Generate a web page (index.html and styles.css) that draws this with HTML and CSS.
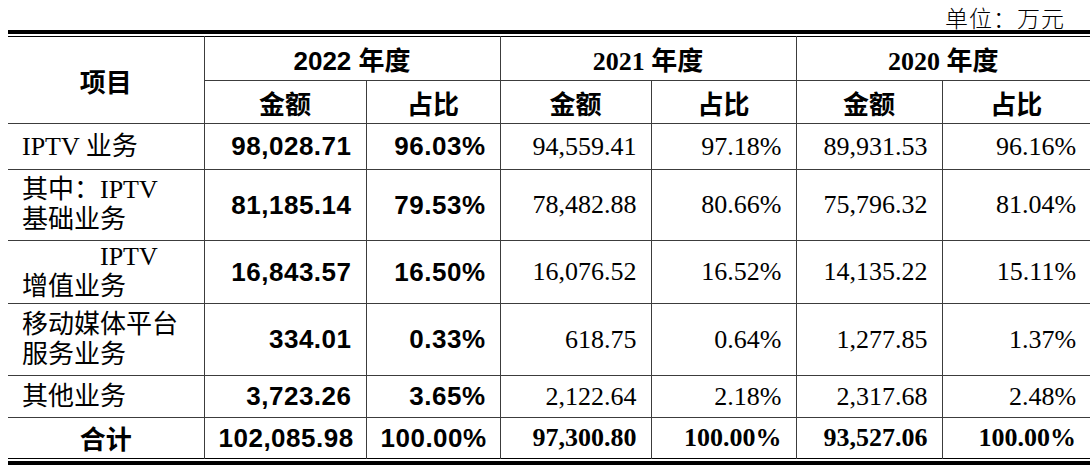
FILE: index.html
```html
<!DOCTYPE html>
<html lang="zh-CN">
<head>
<meta charset="utf-8">
<title>收入构成</title>
<link rel="stylesheet" href="styles.css">
</head>
<body>
<div class="page">
  <div class="unit">单位：万元</div>
  <div class="frame">
    <table class="grid">
      <colgroup>
        <col class="c-label"><col class="c-a22"><col class="c-p22"><col class="c-a21"><col class="c-p21"><col class="c-a20"><col class="c-p20">
      </colgroup>
      <thead>
        <tr class="row-h1">
          <th rowspan="2" class="hd">项目</th>
          <th colspan="2" class="yr yr-sans">2022 年度</th>
          <th colspan="2" class="yr yr-serif">2021 年度</th>
          <th colspan="2" class="yr yr-serif">2020 年度</th>
        </tr>
        <tr class="row-h2">
          <th class="hd">金额</th><th class="hd">占比</th>
          <th class="hd">金额</th><th class="hd">占比</th>
          <th class="hd">金额</th><th class="hd">占比</th>
        </tr>
      </thead>
      <tbody>
        <tr class="row-1">
          <td class="lbl">IPTV 业务</td>
          <td class="n22">98,028.71</td><td class="n22">96.03%</td>
          <td class="num">94,559.41</td><td class="num">97.18%</td>
          <td class="num">89,931.53</td><td class="num">96.16%</td>
        </tr>
        <tr class="row-2">
          <td class="lbl">其中：IPTV<br>基础业务</td>
          <td class="n22">81,185.14</td><td class="n22">79.53%</td>
          <td class="num">78,482.88</td><td class="num">80.66%</td>
          <td class="num">75,796.32</td><td class="num">81.04%</td>
        </tr>
        <tr class="row-3">
          <td class="lbl"><span class="indent">IPTV</span><br>增值业务</td>
          <td class="n22">16,843.57</td><td class="n22">16.50%</td>
          <td class="num">16,076.52</td><td class="num">16.52%</td>
          <td class="num">14,135.22</td><td class="num">15.11%</td>
        </tr>
        <tr class="row-4">
          <td class="lbl">移动媒体平台<br>服务业务</td>
          <td class="n22">334.01</td><td class="n22">0.33%</td>
          <td class="num">618.75</td><td class="num">0.64%</td>
          <td class="num">1,277.85</td><td class="num">1.37%</td>
        </tr>
        <tr class="row-5">
          <td class="lbl">其他业务</td>
          <td class="n22">3,723.26</td><td class="n22">3.65%</td>
          <td class="num">2,122.64</td><td class="num">2.18%</td>
          <td class="num">2,317.68</td><td class="num">2.48%</td>
        </tr>
        <tr class="row-6">
          <td class="lbl lbl-total">合计</td>
          <td class="n22">102,085.98</td><td class="n22">100.00%</td>
          <td class="num num-bold">97,300.80</td><td class="num num-bold">100.00%</td>
          <td class="num num-bold">93,527.06</td><td class="num num-bold">100.00%</td>
        </tr>
      </tbody>
    </table>
  </div>
</div>
</body>
</html>
```

FILE: styles.css
```css
html, body {
  margin: 0;
  padding: 0;
  background: #ffffff;
}

.page {
  width: 1082px;
  padding-left: 8px;
  color: #000;
  font-family: "Liberation Serif", "Noto Sans CJK SC", serif;
}

.unit {
  height: 30px;
  line-height: normal;
  font-size: 23px;
  letter-spacing: 1px;
  font-weight: 300;
  text-align: right;
  padding-right: 25px;
  box-sizing: border-box;
  font-family: "Noto Sans CJK SC", sans-serif;
  overflow: visible;
}

.frame {
  border-top: 4px solid #000;
  border-bottom: 4px solid #000;
  padding: 2px 0;
}

.grid {
  width: 1082px;
  table-layout: fixed;
  border-collapse: collapse;
  border-top: 1px solid #000;
  border-bottom: 1px solid #000;
}

.c-label { width: 196px; }
.c-a22 { width: 162px; }
.c-p22 { width: 134px; }
.c-a21 { width: 151px; }
.c-p21 { width: 145px; }
.c-a20 { width: 146px; }
.c-p20 { width: 148px; }

.grid th,
.grid td {
  border: 1px solid #3c3c3c;
  padding: 0 14px;
  vertical-align: middle;
  font-size: 26px;
  white-space: nowrap;
}

.grid tr > :first-child { border-left: none; }
.grid tr > :last-child { border-right: none; }
.grid thead tr:first-child > * { border-top: none; }
.grid tbody tr:last-child > * { border-bottom: none; }

.row-h1 { height: 44px; }
.row-h2 { height: 43px; }
.row-1 { height: 46px; }
.row-2 { height: 71px; }
.row-3 { height: 63px; }
.row-4 { height: 72px; }
.row-5 { height: 42px; }
.row-6 { height: 41px; }

.hd {
  font-family: "Noto Sans CJK SC", sans-serif;
  font-weight: 700;
  text-align: center;
}

.yr {
  font-weight: 700;
  text-align: center;
}

.yr-sans {
  font-family: "Liberation Sans", "Noto Sans CJK SC", sans-serif;
}

.yr-serif {
  font-family: "Liberation Serif", "Noto Sans CJK SC", serif;
}

.lbl {
  text-align: left;
  padding-left: 15px;
  line-height: 30px;
  font-family: "Liberation Serif", "Noto Sans CJK SC", serif;
  font-weight: 400;
}

.indent {
  padding-left: 78px;
}

.lbl-total {
  text-align: center;
  font-family: "Noto Sans CJK SC", sans-serif;
  font-weight: 700;
}

.n22 {
  text-align: right;
  font-family: "Liberation Sans", "Noto Sans CJK SC", sans-serif;
  font-weight: 700;
  letter-spacing: 0.5px;
}

.num {
  text-align: right;
  font-family: "Liberation Serif", serif;
}

.num-bold {
  font-weight: 700;
}
```
